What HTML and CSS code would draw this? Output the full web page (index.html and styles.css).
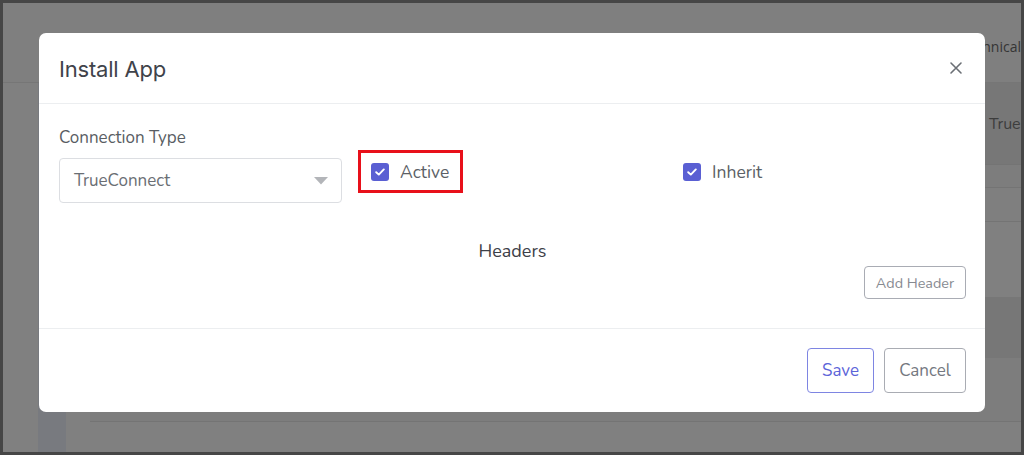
FILE: index.html
```html
<!DOCTYPE html>
<html>
<head>
<meta charset="utf-8">
<link rel="stylesheet" href="styles.css">
</head>
<body>
<div class="frame">
  <div class="page">
    <div class="topbar">
      <div class="top-spacer"></div>
      <div class="top-icon top-m"></div>
      <div class="top-icon top-q"></div>
      <div class="avatar"></div>
      <div class="username">Technical</div>
    </div>
    <div class="page-main">
      <div class="side-a"></div>
      <div class="side-b"></div>
      <div class="content">
        <div class="row row-head"><span class="row-text">True</span></div>
        <div class="row row-1"></div>
        <div class="row row-2"></div>
        <div class="row row-3"></div>
        <div class="row row-4"></div>
        <div class="row row-5"></div>
      </div>
    </div>
  </div>

  <div class="modal">
    <div class="modal-header">
      <h2 class="modal-title">Install App</h2>
      <button class="close" aria-label="Close">
        <svg width="14" height="14" viewBox="0 0 14 14"><path d="M2 2 L12 12 M12 2 L2 12" stroke="#6b6f75" stroke-width="1.6" stroke-linecap="round" fill="none"/></svg>
      </button>
    </div>
    <div class="modal-body">
      <div class="form-grid">
        <div class="field">
          <label class="field-label">Connection Type</label>
          <div class="select">
            <span class="select-value">TrueConnect</span>
            <svg class="caret" width="14" height="8" viewBox="0 0 14 8"><path d="M0 0 H14 L7 7.5 Z" fill="#b3b5b9"/></svg>
          </div>
        </div>
        <div class="check-wrap highlight">
          <span class="checkbox"><svg width="10" height="8" viewBox="0 0 10 8"><path d="M1.2 4.2 L3.8 6.6 L8.8 1.4" stroke="#fff" stroke-width="1.9" fill="none" stroke-linecap="round" stroke-linejoin="round"/></svg></span>
          <span class="check-label">Active</span>
        </div>
        <div class="check-wrap">
          <span class="checkbox"><svg width="10" height="8" viewBox="0 0 10 8"><path d="M1.2 4.2 L3.8 6.6 L8.8 1.4" stroke="#fff" stroke-width="1.9" fill="none" stroke-linecap="round" stroke-linejoin="round"/></svg></span>
          <span class="check-label">Inherit</span>
        </div>
      </div>
      <div class="headers-title">Headers</div>
      <div class="headers-actions">
        <button class="btn btn-small">Add Header</button>
      </div>
    </div>
    <div class="modal-footer">
      <button class="btn btn-primary">Save</button>
      <button class="btn btn-secondary">Cancel</button>
    </div>
  </div>
</div>
</body>
</html>
```

FILE: styles.css
```css
* { box-sizing: border-box; }
html, body { margin: 0; padding: 0; }
body {
  width: 1024px;
  height: 455px;
  overflow: hidden;
  background: #454545;
  font-family: "Nunito", "Noto Sans", sans-serif;
}
.frame {
  position: relative;
  width: 1024px;
  height: 455px;
  border: 3px solid #464646;
  overflow: hidden;
  background: #808080;
}
.page {
  display: flex;
  flex-direction: column;
  height: 100%;
}
.topbar {
  height: 80px;
  flex-shrink: 0;
  display: flex;
  align-items: center;
  border-bottom: 1px solid #767676;
  background: #7f7f7f;
}
.top-spacer { flex: 1; }
.top-icon {
  width: 22px;
  height: 22px;
  margin-top: 44px;
}
.top-m { border-top: 4px solid #2f3036; margin-right: 26px; width: 30px; }
.top-q { border: 3px solid #2f3036; border-radius: 50%; margin-right: 30px; }
.avatar {
  width: 42px;
  height: 42px;
  border-radius: 50%;
  background: #3a3c45;
  margin-top: 38px;
  margin-right: 42px;
}
.username {
  font-family: "Open Sans", sans-serif;
  font-size: 14px;
  color: #353535;
  margin-top: 8px;
  width: 54px;
  white-space: nowrap;
  overflow: hidden;
  direction: rtl;
  text-align: left;
}
.page-main {
  flex: 1;
  display: flex;
  min-width: 0;
}
.side-a { width: 35px; flex-shrink: 0; background: #808080; }
.side-b { width: 28px; flex-shrink: 0; background: #787a7f; }
.content {
  flex: 1;
  min-width: 0;
  padding-left: 24px;
  display: flex;
  flex-direction: column;
  overflow: hidden;
}
.row { border-bottom: 1px solid #747474; flex-shrink: 0; }
.row-head {
  height: 82px;
  background: #777;
  padding-left: 899px;
  display: flex;
  align-items: center;
  white-space: nowrap;
  overflow: hidden;
}
.row-text { font-size: 16px; color: #3d3d3d; }
.row-1 { height: 23px; background: #7d7d7d; }
.row-2 { height: 34px; background: #7f7f7f; }
.row-3 { height: 75px; background: #808080; border-bottom: none; }
.row-4 { height: 61px; background: #777; border-bottom: none; }
.row-5 { height: 64px; background: #7d7d7d; }

/* Modal */
.modal {
  position: absolute;
  left: 36px;
  top: 30px;
  width: 946px;
  height: 379px;
  background: #fff;
  border-radius: 7px;
  display: flex;
  flex-direction: column;
}
.modal-header {
  height: 71px;
  flex-shrink: 0;
  border-bottom: 1px solid #eceef0;
  display: flex;
  align-items: center;
  justify-content: space-between;
  padding: 0 20px;
}
.modal-title {
  margin: 0;
  font-family: "Inter", sans-serif;
  font-weight: 400;
  font-size: 22px;
  color: #3f434a;
  letter-spacing: -0.2px;
  padding-top: 1px;
}
.close {
  background: none;
  border: none;
  padding: 0;
  width: 14px;
  height: 14px;
  margin-right: 2px;
  display: flex;
}
.modal-body {
  padding: 24px 19px 28px 20px;
  border-bottom: 1px solid #eceef0;
  flex: 1;
}
.form-grid {
  display: grid;
  grid-template-columns: 283px 1fr 1fr;
  column-gap: 16px;
  align-items: start;
}
.field-label {
  display: block;
  font-size: 17px;
  line-height: 20px;
  color: #595d63;
  margin-bottom: 10px;
}
.select {
  height: 45px;
  border: 1px solid #dcdee2;
  border-radius: 4px;
  display: flex;
  align-items: center;
  justify-content: space-between;
  padding: 0 13px 0 14px;
}
.select-value { font-size: 17px; color: #6a6e74; }
.caret { margin-top: 1px; }
.check-wrap {
  margin-top: 22px;
  height: 43px;
  display: inline-flex;
  align-items: center;
  justify-self: start;
  padding: 0 11px 0 10px;
  border: 3px solid transparent;
}
.highlight { border-color: #e8101a; }
.checkbox {
  width: 18px;
  height: 18px;
  border-radius: 3px;
  background: #5a5fd3;
  display: inline-flex;
  align-items: center;
  justify-content: center;
  margin-right: 11px;
}
.check-label { font-size: 17.5px; color: #5b5f66; }
.headers-title {
  margin-top: 36px;
  text-align: center;
  font-size: 18px;
  line-height: 24px;
  color: #3d4047;
}
.headers-actions {
  display: flex;
  justify-content: flex-end;
  margin-top: 3px;
}
.btn {
  font-family: "Nunito", "Noto Sans", sans-serif;
  background: #fff;
  border-radius: 4px;
  cursor: pointer;
}
.btn-small {
  height: 33px;
  width: 102px;
  padding: 0;
  border: 1px solid #a9acb4;
  color: #878a91;
  font-size: 14.4px;
}
.modal-footer {
  height: 83px;
  flex-shrink: 0;
  display: flex;
  justify-content: flex-end;
  align-items: center;
  gap: 10px;
  padding: 0 19px 0 20px;
}
.btn-primary {
  height: 45px;
  width: 67px;
  border: 1px solid #7e85e2;
  color: #5c64d9;
  font-size: 17px;
  padding: 0;
}
.btn-secondary {
  height: 45px;
  width: 82px;
  border: 1px solid #a9acb3;
  color: #747880;
  font-size: 17px;
  padding: 0;
}
```
